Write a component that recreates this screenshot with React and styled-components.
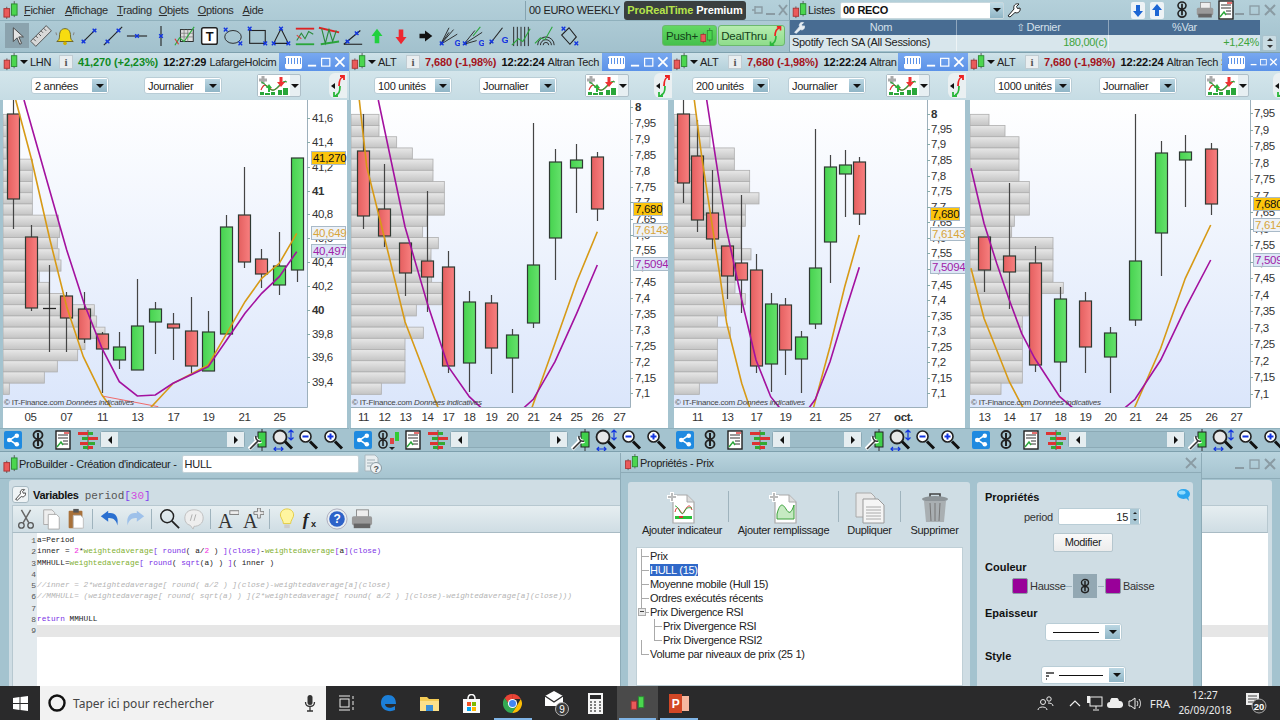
import React from "react";
import styled, { createGlobalStyle } from "styled-components";

const Global = createGlobalStyle`
  html, body { margin: 0; padding: 0; width: 1280px; height: 720px; overflow: hidden; background: #a4c3cf; }
  * { box-sizing: border-box; }
  body { font-family: "Liberation Sans", Arial, sans-serif; font-size: 11px; letter-spacing: -0.3px; color: #222; }
`;

/* ---------- shell ---------- */
const Page = styled.div`display:flex;flex-direction:column;width:1280px;height:720px;overflow:hidden;`;
const TopBand = styled.div`display:flex;height:52px;flex:none;`;
const MainBar = styled.div`width:790px;flex:none;display:flex;flex-direction:column;background:linear-gradient(#b4d0da,#a2c1cd);border-right:1px solid #84a4b1;`;
const MenuRow = styled.div`height:21px;display:flex;align-items:center;padding-left:3px;border-bottom:1px solid #8fb0bc;`;
const MenuItem = styled.span`display:inline-block;margin-left:${p => p.$gap}px;color:#2b2b2b;white-space:nowrap;&::first-letter{text-decoration:underline;}`;
const Instrument = styled.span`margin-left:auto;padding-left:3px;border-left:1px solid #85a3af;height:19px;line-height:18px;white-space:nowrap;`;
const PremiumBadge = styled.span`margin-left:4px;width:122px;flex:none;height:19px;line-height:18px;background:#3a3f3f;border-radius:3px;text-align:center;font-weight:bold;letter-spacing:-0.1px;color:#fff;white-space:nowrap;& i{font-style:normal;color:#b6e34b;}`;
const WindowControls = styled.span`display:flex;gap:3px;align-items:center;flex:none;margin-left:${p => p.$ml ?? "auto"};padding-right:${p => p.$pad ?? 0}px;`;
const ToolRow = styled.div`flex:1;display:flex;align-items:center;padding:0 0 2px 5px;`;
const ToolCell = styled.span`width:24px;height:25px;flex:none;display:flex;align-items:center;justify-content:center;background:${p => p.$on ? "#8ba3ae" : "transparent"};`;
const PushGroup = styled.div`margin-left:auto;margin-right:4px;display:flex;height:21px;gap:1px;`;
const PushButton = styled.span`width:${p => p.$w}px;flex:none;display:flex;align-items:center;justify-content:center;gap:2px;border-radius:3px;font-size:11.5px;letter-spacing:-0.2px;color:#14421a;background:${p => p.$alt ? "linear-gradient(#b5ecae,#8fdd8c)" : "linear-gradient(#62d863,#45c04c)"};border:1px solid #6cb86e;white-space:nowrap;`;

/* list panel */
const ListPanel = styled.div`flex:1;display:flex;flex-direction:column;background:linear-gradient(#b4d0da,#a2c1cd);`;
const ListHead = styled.div`height:20px;display:flex;align-items:center;padding-left:2px;`;
const ListTitle = styled.span`margin-left:1px;width:27px;flex:none;color:#222;`;
const ListSelect = styled.span`margin-left:5px;width:164px;flex:none;height:17px;background:#fff;border-radius:2px;border:1px solid #c8d8de;display:flex;align-items:center;justify-content:space-between;padding-left:2px;font-weight:bold;color:#111;`;
const SmallArrow = styled.span`width:13px;height:15px;background:linear-gradient(#c0dbe6,#8fb5c5);display:flex;align-items:center;justify-content:center;flex:none;&::after{content:"";border:4px solid transparent;border-top-color:#111;border-bottom:0;}`;
const IconSlot = styled.span`display:inline-flex;align-items:center;justify-content:center;flex:none;width:${p => p.$w}px;margin-left:${p => p.$ml || 0}px;`;
const TableHead = styled.div`display:grid;grid-template-columns:167px 152px 151px;height:15px;background:#486c92;color:#d5e0ea;line-height:15px;width:470px;position:relative;`;
const HeadCell = styled.span`text-align:center;border-right:1px solid #8fa6bd;padding-left:${p => p.$pad || 0}px;&:last-child{border:0;}`;
const HeadIcon = styled.span`position:absolute;left:3px;top:1px;display:flex;`;
const SortArrow = styled.span`font-family:"DejaVu Sans",sans-serif;font-size:10px;margin-right:2px;`;
const TableRow = styled.div`display:flex;height:16px;`;
const RowCells = styled.div`display:grid;grid-template-columns:167px 152px 151px;width:470px;background:#d8e6ec;line-height:15px;`;
const RowCell = styled.span`padding:0 1px 0 2px;border-right:1px solid #eef4f6;text-align:${p => p.$right ? "right" : "left"};color:${p => p.$right ? "#3da33b" : "#222"};white-space:nowrap;overflow:hidden;&:last-child{border:0;}`;
const Stepper = styled.span`width:15px;margin-left:2px;background:#c9dce3;border:1px solid #a9c2cc;border-radius:2px;display:flex;flex-direction:column;align-items:center;justify-content:space-around;&::before{content:"";border:3px solid transparent;border-bottom-color:#333;border-top:0;}&::after{content:"";border:3px solid transparent;border-top-color:#333;border-bottom:0;}`;

/* chart windows */
const ChartBand = styled.div`display:flex;height:399px;flex:none;`;
const ChartWindow = styled.div`flex:none;width:${p => p.$w}px;margin-left:${p => p.$ml}px;display:flex;flex-direction:column;overflow:hidden;background:#a4c3cf;`;
const TitleBar = styled.div`height:19px;display:flex;align-items:center;flex:none;background:linear-gradient(#cfe2e9,#b4d0da);padding-left:${p => p.$lead}px;position:relative;overflow:hidden;border-top:1px solid #7ea0ad;`;
const Caret = styled.span`margin:0 2px 0 2px;border:4px solid transparent;border-top-color:#111;border-bottom:0;`;
const Sym = styled.span`width:${p => p.$w}px;flex:none;color:#222;`;
const InfoBox = styled.span`width:14px;height:14px;flex:none;background:#e9eef0;border:1px solid #c0ccd2;font-family:"Liberation Serif",serif;font-weight:bold;font-size:11px;text-align:center;line-height:12px;color:#555;margin-right:5px;`;
const Quote = styled.span`font-weight:bold;flex:none;letter-spacing:-0.1px;margin-right:5px;color:${p => p.$up ? "#108a1e" : "#a3141c"};`;
const Clock = styled.span`font-weight:bold;flex:none;letter-spacing:-0.1px;margin-right:3px;color:#111;`;
const Name = styled.span`white-space:nowrap;color:#222;flex:none;`;
const BlueControls = styled.span`position:absolute;top:0;bottom:0;left:${p => p.$left}px;right:0;background:linear-gradient(#78a8f0,#5b92e8);display:flex;align-items:center;padding-left:6px;gap:3px;`;
const KeyboardKey = styled.span`width:17px;height:13px;background:#fff;border-radius:2px;margin-right:2px;flex:none;background-image:repeating-linear-gradient(90deg,#5b92e8 0 1px,#fff 1px 3px);background-size:100% 6px;background-repeat:no-repeat;background-position:0 2px;`;
const ControlBar = styled.div`height:29px;flex:none;display:flex;align-items:center;background:linear-gradient(#d3e5eb,#c6dce4);padding-left:${p => p.$lead}px;overflow:hidden;`;
const Select = styled.span`width:${p => p.$w || 78}px;height:${p => p.$h || 17}px;flex:none;background:#fff;border:1px solid #b9cdd6;border-radius:3px;display:flex;align-items:center;justify-content:space-between;padding:1px 1px 1px 3px;margin-left:${p => p.$ml || 0}px;white-space:nowrap;`;
const SelectArrow = styled.span`width:15px;align-self:stretch;background:linear-gradient(#bcd7e3,#8fb5c6);display:flex;align-items:center;justify-content:center;flex:none;&::after{content:"";border:4px solid transparent;border-top-color:#111;border-bottom:0;}`;
const IndicatorBtn = styled.span`display:flex;align-items:center;height:23px;flex:none;margin-left:${p => p.$ml}px;background:#e7eff2;border:1px solid #aebfc8;border-radius:2px;`;
const SmallCaret = styled.span`width:10px;height:21px;display:flex;align-items:center;justify-content:center;&::after{content:"";border:4px solid transparent;border-top-color:#111;border-bottom:0;}`;
const SideTab = styled.span`margin-left:auto;margin-right:${p => p.$mr}px;width:18px;height:25px;flex:none;background:#eaf0f2;border-radius:6px 0 0 6px;display:flex;align-items:center;justify-content:center;`;
const Surface = styled.div`margin:0 ${p => p.$mr}px 0 ${p => p.$ml}px;height:328px;flex:none;background:#fff;overflow:hidden;& svg{display:block;}`;
const BottomTools = styled.div`flex:1;display:flex;align-items:center;padding-bottom:1px;background:#a4c3cf;border-top:1px solid #8fb0bc;`;
const BottomCell = styled.span`width:${p => p.$w || 25}px;flex:none;height:21px;display:flex;align-items:center;justify-content:center;`;
const ScrollBar = styled.span`width:${p => p.$w}px;flex:none;height:17px;background:#9dbcc8;border:1px solid #8caab6;border-radius:3px;display:flex;justify-content:space-between;`;
const ScrollEnd = styled.span`width:17px;background:#e5edf0;display:flex;align-items:center;justify-content:center;&::after{content:"";border:4px solid transparent;${p => p.$left ? "border-right-color:#111;border-left:0;" : "border-left-color:#111;border-right:0;"}}`;

const AxisText = styled.text`font-family:"Liberation Sans",Arial,sans-serif;font-size:11.5px;letter-spacing:-0.4px;fill:#333;font-weight:${p => p.$bold ? "bold" : "normal"};dominant-baseline:central;`;
const DateText = styled.text`font-family:"Liberation Sans",Arial,sans-serif;font-size:11.5px;letter-spacing:-0.4px;fill:#333;text-anchor:middle;dominant-baseline:central;font-weight:${p => p.$bold ? "bold" : "normal"};`;
const TagText = styled.text`font-family:"Liberation Sans",Arial,sans-serif;font-size:11.5px;letter-spacing:-0.3px;dominant-baseline:central;`;
const Watermark = styled.text`font-family:"Liberation Sans",Arial,sans-serif;font-size:8px;letter-spacing:-0.2px;fill:#444;& tspan{font-style:italic;}`;

/* builder */
const BuilderBand = styled.div`position:relative;height:235px;flex:none;display:flex;flex-direction:column;background:#a4c3cf;border-top:1px solid #7ea0ad;`;
const BuilderTitle = styled.div`height:27px;flex:none;display:flex;align-items:center;padding:0 0 2px 3px;background:linear-gradient(#b9d4de,#a6c4d0);border-bottom:1px solid #8dabb7;`;
const BuilderLabel = styled.span`margin-left:1px;white-space:nowrap;color:#222;`;
const NameInput = styled.span`margin-left:5px;width:177px;flex:none;height:18px;background:#fff;border:1px solid #c3d2d8;border-radius:2px;padding-left:2px;line-height:16px;`;
const TabPanel = styled.div`flex:1;margin:1px 0 0 9px;width:1263px;background:#cfdde4;border-radius:3px 3px 0 0;display:flex;flex-direction:column;padding:4px 4px 0 3px;`;
const VarRow = styled.div`height:21px;flex:none;display:flex;align-items:center;`;
const WrenchBtn = styled.span`width:17px;height:17px;background:#eef3f5;border:1px solid #a8bac3;border-radius:3px;display:flex;align-items:center;justify-content:center;`;
const VarLabel = styled.span`font-weight:bold;margin-left:4px;color:#111;`;
const VarCode = styled.span`font-family:"Liberation Mono",monospace;font-size:11px;letter-spacing:0;margin-left:6px;margin-top:3px;color:#555;& em{font-style:normal;color:#7f3dee;}& b{font-weight:normal;color:#d24be0;}`;
const EditorBox = styled.div`flex:1;display:flex;flex-direction:column;`;
const EditorTools = styled.div`height:28px;flex:none;display:flex;align-items:center;background:linear-gradient(#e6eef1,#cfdde4);border:1px solid #b7c8d0;border-bottom:1px solid #a9bbc4;`;
const EdCell = styled.span`width:${p => p.$w || 25}px;flex:none;display:flex;align-items:center;justify-content:center;`;
const EdSep = styled.span`width:1px;height:20px;flex:none;background:#9fb3bd;margin:0 4px;`;
const CodeWrap = styled.div`flex:1;display:flex;background:#fff;border-left:1px solid #b7c8d0;overflow:hidden;`;
const Gutter = styled.div`width:24px;flex:none;background:#e3eaee;padding-top:2px;`;
const GutterNum = styled.div`height:11.3px;line-height:11.3px;font-family:"Liberation Mono",monospace;font-size:8px;letter-spacing:0;text-align:right;color:#555;padding-right:1px;`;
const CodeCol = styled.div`flex:1;padding-top:2px;`;
const CodeLine = styled.div`height:11.3px;line-height:11.3px;font-family:"Liberation Mono",monospace;font-size:7.76px;letter-spacing:0;white-space:pre;background:${p => p.$hl ? "#e6e6e6" : "transparent"};`;
const Tok = styled.span`color:${p => ({ k: "#7a2fe6", f: "#82b030", n: "#f030e0", c: "#b4b4b4", t: "#222" }[p.$t])};font-style:${p => p.$t === "c" ? "italic" : "normal"};`;

/* properties dialog */
const Dialog = styled.div`position:absolute;left:620px;top:1px;width:582px;height:233px;background:#a4c3cf;border-left:1px solid #8dabb7;border-right:1px solid #8dabb7;display:flex;flex-direction:column;`;
const DialogTitle = styled.div`height:20px;flex:none;display:flex;align-items:center;padding-left:3px;background:linear-gradient(#b9d4de,#a6c4d0);border-bottom:1px solid #8dabb7;`;
const DialogBody = styled.div`flex:1;display:flex;gap:7px;padding:9px 8px 0 7px;min-height:0;`;
const LeftPane = styled.div`width:342px;flex:none;background:#cfdde4;border-radius:3px 3px 0 0;padding:9px 7px 0 8px;display:flex;flex-direction:column;`;
const RightPane = styled.div`flex:1;background:#cfdde4;border-radius:3px 3px 0 0;padding:8px 8px 0 8px;position:relative;`;
const ActionRow = styled.div`display:flex;height:56px;flex:none;align-items:flex-start;`;
const Action = styled.div`width:${p => p.$w}px;flex:none;display:flex;flex-direction:column;align-items:center;gap:0;`;
const ActionIcon = styled.span`height:33px;display:flex;align-items:flex-end;`;
const ActionLabel = styled.span`white-space:nowrap;color:#222;`;
const ActionSep = styled.span`width:1px;height:31px;flex:none;background:#9fb3bd;`;
const TreeBox = styled.div`flex:1;background:#fff;border:1px solid #bfcfd6;padding-top:1px;`;
const TreeRow = styled.div`height:14px;line-height:14px;padding-left:${p => 13 + p.$depth * 13}px;position:relative;white-space:nowrap;color:#222;&::before{content:"";position:absolute;left:${p => 4 + p.$depth * 13}px;top:7px;width:8px;border-top:1px solid #aaa;}&::after{content:"";position:absolute;left:${p => 4 + p.$depth * 13}px;top:${p => p.$short ? "0" : "-7px"};height:${p => p.$short ? 7 : 14}px;border-left:1px solid #aaa;}`;
const TreeLabel = styled.span`${p => p.$sel ? "background:#2f68c8;color:#fff;" : ""}`;
const Expander = styled.span`position:absolute;left:1px;top:3px;width:8px;height:8px;background:#e8e8e8;border:1px solid #aaa;z-index:1;&::after{content:"";position:absolute;left:1px;top:2px;width:4px;border-top:1px solid #444;}`;
const SectionTitle = styled.div`font-weight:bold;letter-spacing:0;color:#111;height:14px;line-height:14px;margin-top:${p => p.$mt || 0}px;`;
const BubbleSlot = styled.span`position:absolute;right:3px;top:7px;display:flex;`;
const PeriodRow = styled.div`display:flex;align-items:center;margin-top:4px;padding-left:39px;height:17px;`;
const PeriodLabel = styled.span`width:30px;flex:none;color:#333;`;
const NumInput = styled.span`margin-left:4px;width:83px;flex:none;height:17px;background:#fff;border:1px solid #b9cdd6;border-radius:2px;display:flex;align-items:center;justify-content:flex-end;`;
const SpinBtn = styled.span`width:9px;height:15px;margin-left:2px;margin-right:1px;background:#a9c7d4;display:flex;flex-direction:column;justify-content:space-around;align-items:center;&::before{content:"";border:2px solid transparent;border-bottom-color:#222;border-top:0;}&::after{content:"";border:2px solid transparent;border-top-color:#222;border-bottom:0;}`;
const ModifyBtn = styled.div`margin:8px 0 0 68px;width:60px;height:19px;line-height:17px;text-align:center;background:linear-gradient(#fafafa,#ececec);border:1px solid #b5c6ce;border-radius:2px;color:#222;`;
const ColorRow = styled.div`display:flex;align-items:center;height:24px;padding-left:27px;`;
const Swatch = styled.span`width:16px;height:16px;flex:none;background:#990099;border:1px solid #8a9aa2;border-radius:2px;`;
const ColorLabel = styled.span`margin-left:2px;color:#333;width:${p => p.$w}px;flex:none;`;
const Dash = styled.span`width:6px;flex:none;border-top:1px solid #9fb3bd;margin:0 1px 0 1px;`;
const LinkBox = styled.span`width:24px;height:24px;flex:none;background:#93a8b3;display:flex;align-items:center;justify-content:center;`;
const LineSample = styled.span`flex:1;border-top:1px solid #111;margin:0 6px 0 4px;`;
const SelectWrap = styled.div`margin-top:3px;padding-left:${p => p.$lead}px;`;

/* taskbar */
const Taskbar = styled.div`height:34px;flex:none;display:flex;align-items:center;background:#2a2a2b;color:#fff;`;
const StartBtn = styled.span`width:40px;height:34px;flex:none;display:flex;align-items:center;justify-content:center;`;
const SearchBox = styled.span`width:286px;height:34px;flex:none;background:#f2f2f2;display:flex;align-items:center;padding-left:7px;color:#444;font-family:"Noto Sans",sans-serif;font-size:12px;letter-spacing:0;`;
const SearchText = styled.span`margin-left:6px;flex:1;white-space:nowrap;`;
const TaskIcon = styled.span`width:41.5px;height:34px;flex:none;display:flex;align-items:center;justify-content:center;position:relative;background:${p => p.$active ? "#4a4a4a" : "transparent"};&::after{content:"";position:absolute;left:${p => p.$run ? "2px" : "50%"};right:${p => p.$run ? "2px" : "50%"};bottom:0;height:2px;background:#7fb4e6;}`;
const TrayWrap = styled.span`margin-left:auto;display:flex;align-items:center;height:34px;`;
const TrayIcon = styled.span`width:${p => p.$w || 20}px;display:flex;align-items:center;justify-content:center;flex:none;font-size:11.5px;letter-spacing:0;color:#e8e8e8;font-family:"Noto Sans",sans-serif;`;
const ClockBox = styled.span`width:60px;flex:none;text-align:center;line-height:15px;font-size:10px;letter-spacing:0;color:#eee;font-family:"Noto Sans",sans-serif;`;

/* ---------- icons ---------- */
const Svg = ({ w = 24, h = 24, vb = "0 0 24 24", children }) => <svg width={w} height={h} viewBox={vb} fill="none">{children}</svg>;
const Logo = ({ w = 16, h = 20 }) => (
  <Svg w={w} h={h} vb="0 0 16 20">
    <path d="M4 6v13M12 0v17" stroke="#555" />
    <rect x="1" y="8" width="6" height="9" fill="#ea5a5a" stroke="#a33" />
    <rect x="9" y="3" width="6" height="12" fill="#4bd64f" stroke="#2a8a32" />
  </Svg>
);
const P = ({ x, y, c = "#1235e0" }) => <path d={`M${x - 2} ${y - 2}l4 4m0-4l-4 4`} stroke={c} strokeWidth="1.5" />;
const L = ({ d, c = "#222", sw = 1.2 }) => <path d={d} stroke={c} strokeWidth={sw} />;
const tools = {
  cursor: <path d="M8 3v15l4-4 3 7 2-1-3-7h5z" fill="#e4e4e4" stroke="#444" />,
  ruler: <g transform="rotate(-45 12 12)"><rect x="0" y="8" width="24" height="8" fill="#d8d8d8" stroke="#555" /><L d="M4 8v4M8 8v3M12 8v4M16 8v3M20 8v4" c="#555" sw="1" /></g>,
  bell: <g><path d="M12 4c-4 0-6 3-6 8 0 3-1 5-3 6h18c-2-1-3-3-3-6 0-5-2-8-6-8z" fill="#f7dc10" stroke="#6b6420" /><circle cx="12" cy="20" r="2" fill="#d0b000" /><L d="M2 8l1 3M22 8l-1 3" c="#888" /></g>,
  line: <g><L d="M5 19L19 5" /><P x={6} y={18} /><P x={18} y={6} /></g>,
  line2: <g><L d="M2 22L22 2" /><P x={6} y={18} /><P x={18} y={6} /></g>,
  hline: <g><L d="M1 12h22" /><P x={12} y={12} /></g>,
  vline: <g><L d="M12 1v22" /><P x={12} y={12} /></g>,
  grid: <g><rect x="7" y="5" width="14" height="13" fill="#ddd" stroke="#222" /><L d="M7 9h14M7 13h14M11 5v13M15 5v13" c="#777" sw=".8" /><L d="M1 22l5-8 5 4 11-16" c="#2aa63a" /><L d="M1 15l4 6" c="#d33" /></g>,
  text: <g><rect x="4" y="3" width="17" height="18" rx="2" fill="#fff" stroke="#222" strokeWidth="1.6" /><text x="12.5" y="17" textAnchor="middle" fontFamily="Liberation Sans" fontWeight="bold" fontSize="14" fill="#111">T</text></g>,
  ellipse: <g><ellipse cx="12" cy="13" rx="9" ry="7" stroke="#222" /><P x={4} y={5} /><P x={20} y={20} /></g>,
  rect: <g><rect x="4" y="6" width="17" height="14" stroke="#222" strokeWidth="1.2" /><P x={4} y={4} /><P x={21} y={20} /></g>,
  tri: <g><path d="M12 4L4 20h16z" stroke="#222" strokeWidth="1.2" /><P x={12} y={4} /><P x={4} y={20} /><P x={20} y={20} /></g>,
  zig: <g><L d="M2 4h20" c="#d22" sw="2" /><L d="M2 21h20" c="#2aa63a" sw="2" /><L d="M3 17l5-8 4 6 4-8 5 3" c="#2a8a3a" /><L d="M3 11l5 4" c="#d44" /></g>,
  fan: <g><L d="M1 3l22 5" c="#d22" sw="2" /><L d="M3 21l20-3" c="#2aa63a" sw="2" /><L d="M4 4l4 16 4-15 4 13 4-12" c="#2a8a3a" /></g>,
  angle: <g><L d="M2 21L20 6" /><L d="M2 21h20" /><P x={6} y={18} /><P x={16} y={9} /></g>,
  up: <path d="M12 4l6 8h-3.5v8h-5v-8H6z" fill="#21d13f" />,
  down: <path d="M12 21l6-8h-3.5V5h-5v8H6z" fill="#ee2730" />,
  right: <path d="M20 12l-8-6v3.5H6v5h6V18z" fill="#111" />,
  gfan: <g><L d="M3 21L12 3M3 21L17 5M3 21L21 10M3 21l9-13" c="#222" sw="1" /><P x={4} y={20} /><text x="18" y="23" fontFamily="Liberation Sans" fontWeight="bold" fontSize="9" fill="#1235e0">G</text></g>,
  gfan2: <g><L d="M2 21L14 6M2 21L22 8M2 21l14-4" c="#222" sw="1" /><L d="M12 12l8-10" c="#2aa63a" /><P x={3} y={20} /><text x="18" y="23" fontFamily="Liberation Sans" fontWeight="bold" fontSize="9" fill="#1235e0">G</text></g>,
  gline: <g><L d="M4 21L18 3" /><P x={6} y={18} /><text x="17" y="20" fontFamily="Liberation Sans" fontWeight="bold" fontSize="10" fill="#1235e0">G</text></g>,
  fib: <g><L d="M4 2v21M8 2v21M12 2v21M16 2v21M20 2v21" c="#222" sw="1" /><L d="M2 22l7-7 5 3 8-14" c="#2aa63a" /></g>,
  arc: <g><path d="M4 22a9 9 0 0 1 18 0M7 22a6 6 0 0 1 12 0M10 22a3 3 0 0 1 6 0" stroke="#222" /><L d="M1 20l6-6 5 2 8-14" c="#2aa63a" /></g>,
  diamond: <g><path d="M12 3l8 10-7 8-9-10z" stroke="#222" strokeWidth="1.2" /><P x={6} y={4} /><P x={20} y={20} /></g>,
};
const toolOrder = Object.keys(tools);

const Share = () => (
  <Svg w={18} h={18} vb="0 0 19 19">
    <rect width="19" height="19" rx="2" fill="#1f8ae0" />
    <path d="M13 5L6 9.5l7 4.5" stroke="#fff" strokeWidth="1.6" />
    <circle cx="13.5" cy="5" r="2.4" fill="#fff" /><circle cx="13.5" cy="14" r="2.4" fill="#fff" /><circle cx="5.5" cy="9.5" r="2.4" fill="#fff" />
  </Svg>
);
const Chain = ({ w = 18, h = 20, c = "#222" }) => (
  <Svg w={w} h={h} vb="0 0 18 20">
    <ellipse cx="9" cy="5" rx="4.5" ry="4" stroke={c} strokeWidth="1.8" />
    <ellipse cx="9" cy="14" rx="4.5" ry="4" stroke={c} strokeWidth="1.8" />
    <path d="M9 3v13" stroke={c} strokeWidth="2" />
  </Svg>
);
const ChainCandle = () => (
  <Svg w={24} h={22} vb="0 0 24 22">
    <ellipse cx="7" cy="6" rx="4" ry="4" stroke="#222" strokeWidth="1.6" /><ellipse cx="7" cy="15" rx="4" ry="4" stroke="#222" strokeWidth="1.6" />
    <path d="M7 4v13" stroke="#222" strokeWidth="1.6" />
    <rect x="14" y="9" width="4" height="6" fill="#d44" /><rect x="19" y="3" width="4" height="9" fill="#3c3" />
    <path d="M13 18h6l-3 3z" fill="#222" />
  </Svg>
);
const Note = () => (
  <Svg w={16} h={20} vb="0 0 16 20">
    <rect x="1" y="1" width="14" height="18" fill="#fff" stroke="#222" strokeWidth="1.4" />
    <path d="M3 5h10M3 8h10M8 11h5M8 14h5" stroke="#333" />
    <path d="M2 17l4-5 2 3" stroke="#2aa63a" strokeWidth="1.4" /><path d="M9 3h5" stroke="#d33" strokeWidth="1.4" />
  </Svg>
);
const Ladder = () => (
  <Svg w={22} h={20} vb="0 0 22 20">
    <path d="M11 0v20" stroke="#888" strokeWidth="2" />
    <rect x="1" y="2" width="10" height="3" fill="#d33" /><rect x="11" y="2" width="5" height="3" fill="#3a3" />
    <rect x="5" y="7" width="6" height="3" fill="#3a3" /><rect x="11" y="7" width="10" height="3" fill="#d33" />
    <rect x="3" y="12" width="8" height="3" fill="#d33" /><rect x="11" y="12" width="7" height="3" fill="#3a3" />
    <rect x="6" y="16" width="5" height="3" fill="#3a3" /><rect x="11" y="16" width="5" height="3" fill="#d33" />
  </Svg>
);
const WrenchChart = () => (
  <Svg w={20} h={22} vb="0 0 20 22">
    <path d="M14 0v22" stroke="#333" /><rect x="10" y="3" width="8" height="15" fill="#3fcf4a" stroke="#222" />
    <path d="M1 20l9-9M8 8a3.5 3.5 0 0 0 5 4" stroke="#fff" strokeWidth="4" />
    <path d="M2 20l8-8M8 7a4 4 0 0 0 5 5" stroke="#333" strokeWidth="1.6" />
  </Svg>
);
const Magnifier = ({ kind }) => (
  <Svg w={24} h={22} vb="0 0 24 22">
    {kind === "fit"
      ? <circle cx="9" cy="8" r="6.5" fill="#e8e8e8" stroke="#222" strokeWidth="1.8" />
      : <circle cx="9.500" cy="7.500" r="5.500" fill="#fff" stroke="#222" strokeWidth="1.6" />}
    <path d="M14 12.500l7 7" stroke="#111" strokeWidth="3" />
    {kind !== "fit" && <path d="M6.500 7.500h6" stroke="#1235e0" strokeWidth="2" />}
    {kind === "plus" && <path d="M9.500 4.500v6" stroke="#1235e0" strokeWidth="2" />}
    {kind === "fit" && <path d="M20 1v10M17.500 3.500L20 1l2.500 2.500M17.500 8.500L20 11l2.500-2.500M3 20h9M5 18l-2 2 2 2M10 18l2 2-2 2" stroke="#1235e0" strokeWidth="1.2" />}
  </Svg>
);
const IndicatorIcon = () => (
  <Svg w={32} h={21} vb="0 0 32 21">
    <rect width="32" height="21" fill="#fff" />
    <path d="M5 1v8M1 5h8" stroke="#aaa" strokeWidth="3" />
    <path d="M3 15c4-10 7-2 11 0s8-7 14-9" stroke="#d33" strokeWidth="1.2" />
    <path d="M3 7c4 0 8 10 13 8s7-10 13-8" stroke="#2aa63a" strokeWidth="1.2" />
    <path d="M23 2l4 5h-2.500v5h-3V7H19z" fill="#e33" transform="rotate(180 23 7)" />
    <path d="M11 9l3 4h-2v4h-2v-4H8z" fill="#2ab63a" />
    <path d="M2 17h4v3H2zM7 18h5v2H7zM13 17h4v3h-4zM20 15h4v5h-4zM25 13h5v7h-5z" fill="#2aa63a" />
  </Svg>
);
const Thrust = ({ w = 13, h = 20 }) => (
  <Svg w={w} h={h} vb="0 0 13 22">
    <path d="M6 11C6 5 8 3 11 2M8 1h4v4" stroke="#e22" strokeWidth="1.8" />
    <path d="M7 11c0 6-2 8-5 9M5 21H1v-4" stroke="#2ab63a" strokeWidth="1.8" />
  </Svg>
);
const SideArrows = () => (
  <Svg w={15} h={22} vb="0 0 15 22">
    <path d="M0 11l4-3v6z" fill="#111" />
    <path d="M8 11C8 5 9 3 12 2M9 1h4v4" stroke="#e22" strokeWidth="1.8" />
    <path d="M9 11c0 6-1 8-4 9M7 21H3v-4" stroke="#2ab63a" strokeWidth="1.8" />
  </Svg>
);
const WinMarks = ({ c }) => (
  <Svg w={46} h={12} vb="0 0 46 12">
    <path d="M1 10h9" stroke={c} strokeWidth="2" />
    <rect x="16" y="2" width="9" height="8.500" stroke={c} strokeWidth="1.3" />
    <path d="M31 1l10 10m0-10L31 11" stroke={c} strokeWidth="2" />
  </Svg>
);
const PinMarks = ({ c }) => (
  <Svg w={36} h={12} vb="0 0 36 12">
    <path d="M0 6h3M3 2v8M3 3h7v6H3z" stroke={c} strokeWidth="1.400" />
    <path d="M14 10h9" stroke={c} strokeWidth="2" />
    <path d="M27 1l8 10m0-10l-8 10" stroke={c} strokeWidth="2" />
  </Svg>
);
const Wrench = ({ s = 16, c = "#222", fill = "#fff" }) => (
  <Svg w={s} h={s} vb="0 0 16 16">
    <path d="M2 14l6-7c-1-3 1-6 5-5l-2.500 2.500 1 2L14 6c1 3-2 6-5 4.500L4 15z" fill={fill} stroke={c} />
  </Svg>
);

const DocPlus = ({ wave }) => (
  <Svg w={32} h={32} vb="0 0 32 32">
    <path d="M7 3h14l7 7v21H7z" fill="#fff" stroke="#aaa" strokeWidth="1.2" /><path d="M21 3v7h7" fill="#ddd" stroke="#aaa" />
    <path d="M6 0v10M1 5h10" stroke="#fff" strokeWidth="4" /><path d="M6 1v8M2 5h8" stroke="#bbb" strokeWidth="2" />
    {wave
      ? <path d="M9 27V22c3-12 6-10 9-5s5 5 8-4v14z" fill="#c6eac2" stroke="#3aa03a" />
      : <g><path d="M9 20c3-12 6 6 9 0s6-9 8-2" stroke="#d33" /><path d="M9 14c4 0 6 12 9 6s6-4 8-4" stroke="#2aa63a" /><path d="M9 27h17v-3H9z" fill="#2ac03a" /><path d="M13 26h4v-2h-4z" fill="#d33" /></g>}
  </Svg>
);
const Duplicate = () => (
  <Svg w={32} h={32} vb="0 0 32 32">
    <path d="M2 1h15l4 4v20H2z" fill="#e8e8e8" stroke="#aaa" />
    <path d="M9 7h15l6 6v18H9z" fill="#f5f5f5" stroke="#999" />
    <path d="M12 15h15M12 18h15M12 21h15M12 24h15M12 27h15" stroke="#aaa" />
  </Svg>
);
const Trash = () => (
  <Svg w={28} h={32} vb="0 0 28 32">
    <path d="M9 5V2h10v3" stroke="#444" strokeWidth="1.6" />
    <ellipse cx="14" cy="7" rx="13" ry="3" fill="#8d9498" />
    <path d="M3 9l2 21h18l2-21z" fill="#a9afb2" />
    <path d="M9 11l1 18M14 11v18M19 11l-1 18" stroke="#777" />
  </Svg>
);

const edIcons = {
  cut: <g><path d="M7 2l8 14M17 2L9 16" stroke="#666" strokeWidth="1.6" /><circle cx="7" cy="19" r="3" stroke="#555" strokeWidth="1.4" /><circle cx="17" cy="19" r="3" stroke="#555" strokeWidth="1.4" /></g>,
  copy: <g><path d="M4 2h9l3 3v13H4z" fill="#eee" stroke="#aaa" /><path d="M9 7h9l3 3v13H9z" fill="#fff" stroke="#aaa" /></g>,
  paste: <g><rect x="4" y="3" width="15" height="19" rx="1" fill="#a8713a" /><rect x="9" y="1" width="6" height="4" fill="#555" /><path d="M9 8h8l3 3v11H9z" fill="#fff" stroke="#bbb" /></g>,
  undo: <g><path d="M9 6c8-2 13 3 11 13-1-6-5-9-11-8z" fill="#2a6fd0" /><path d="M2 9l8-6v12z" fill="#2a6fd0" /></g>,
  redo: <g><path d="M15 6C7 4 2 9 4 19c1-6 5-9 11-8z" fill="#9ec1ea" /><path d="M22 9l-8-6v12z" fill="#9ec1ea" /></g>,
  find: <g><circle cx="10" cy="9" r="7" stroke="#222" strokeWidth="1.6" /><path d="M15 14l8 8" stroke="#222" strokeWidth="2" /></g>,
  comment: <g><path d="M12 2c7 0 10 4 10 9 0 6-5 9-10 9l-1 3-3-4c-4-1-6-4-6-8 0-5 3-9 10-9z" fill="#eee" stroke="#bbb" /><path d="M10 7l-2 7M14 7l-2 7" stroke="#aaa" /></g>,
  less: <g><text x="1" y="22" fontFamily="Liberation Serif" fontSize="22" fill="#333">A</text><rect x="14" y="3" width="10" height="4" fill="#eee" stroke="#777" /></g>,
  more: <g><text x="1" y="22" fontFamily="Liberation Serif" fontSize="22" fill="#333">A</text><path d="M17 0h3v4h4v3h-4v4h-3V7h-4V4h4z" fill="#eee" stroke="#777" /></g>,
  bulb: <g><path d="M12 1c-5 0-8 4-7 8 1 3 3 5 3 8h8c0-3 2-5 3-8 1-4-2-8-7-8z" fill="#fff5a0" stroke="#e2c93a" /><rect x="9" y="18" width="6" height="4" fill="#ccc" /></g>,
  fx: <g><text x="2" y="18" fontFamily="Liberation Serif" fontStyle="italic" fontWeight="bold" fontSize="19" fill="#222">f</text><text x="11" y="21" fontFamily="Liberation Sans" fontWeight="bold" fontSize="10" fill="#222">x</text></g>,
  help: <g><circle cx="12" cy="12" r="11" fill="#e8eef2" stroke="#aab" /><circle cx="12" cy="12" r="8.500" fill="#2d62c8" /><text x="12" y="16.500" textAnchor="middle" fontFamily="Liberation Sans" fontWeight="bold" fontSize="13" fill="#fff">?</text></g>,
  print: <g><rect x="6" y="2" width="13" height="8" fill="#eee" stroke="#888" /><rect x="1" y="9" width="22" height="10" rx="2" fill="#9a9a9a" /><rect x="3" y="17" width="18" height="5" fill="#666" /></g>,
};

const Tiny = {
  win: <Svg w={15} h={15} vb="0 0 15 15"><path d="M0 2l6.500-1v6H0zM7.500 1L15 0v7H7.500zM0 8h6.500v6L0 13zM7.500 8H15v7l-7.500-1z" fill="#fff" /></Svg>,
  ring: <Svg w={20} h={20} vb="0 0 20 20"><circle cx="10" cy="10" r="7.500" stroke="#111" strokeWidth="2.4" /></Svg>,
  mic: <Svg w={12} h={17} vb="0 0 12 17"><rect x="3.500" y="0" width="5" height="10" rx="2.500" fill="#333" /><path d="M1.500 7c0 6 9 6 9 0M6 12v4M3 16h6" stroke="#333" strokeWidth="1.300" /></Svg>,
  view: <Svg w={16} h={16} vb="0 0 16 16"><rect x="1" y="4" width="9" height="8" stroke="#eee" /><path d="M0 1h11M0 15h11M14 1v3M14 6v4M14 12v3" stroke="#eee" /></Svg>,
  edge: <Svg w={18} h={18} vb="0 0 18 18"><path d="M2 9c0-5 3-8 7-8 5 0 8 3 8 9H6c0 4 6 5 10 2v4c-6 3-14 0-14-7z" fill="#1c7fd8" /></Svg>,
  folder: <Svg w={19} h={17} vb="0 0 19 17"><path d="M0 2h7l2 2h10v12H0z" fill="#f4cc56" /><rect x="0" y="6" width="19" height="10" fill="#fbe08a" /><rect x="6" y="10" width="7" height="6" fill="#3a8fd8" /></Svg>,
  store: <Svg w={17} h={19} vb="0 0 17 19"><rect x="0" y="5" width="17" height="14" fill="#fafafa" /><path d="M5 5c0-6 7-6 7 0" stroke="#fafafa" strokeWidth="1.500" /><rect x="4" y="8" width="4" height="4" fill="#f25022" /><rect x="9" y="8" width="4" height="4" fill="#7fba00" /><rect x="4" y="13" width="4" height="4" fill="#00a4ef" /><rect x="9" y="13" width="4" height="4" fill="#ffb900" /></Svg>,
  chrome: <Svg w={19} h={19} vb="0 0 19 19"><path d="M9.500 0a9.500 9.500 0 0 1 8.300 5H9.500z" fill="#ea4335" /><path d="M1.700 4a9.500 9.500 0 0 1 8-4v5l-2 8z" fill="#ea4335" /><path d="M17.800 5A9.500 9.500 0 0 1 9 19l4-6z" fill="#fbbc05" /><path d="M1.700 4A9.500 9.500 0 0 0 9 19l4-6-5 0z" fill="#34a853" /><circle cx="9.500" cy="9.500" r="4.600" fill="#fff" /><circle cx="9.500" cy="9.500" r="3.500" fill="#4285f4" /></Svg>,
  mail: <Svg w={30} h={26} vb="-5 0 30 26"><path d="M1 6l9-5 9 5v10H1z" fill="#fff" /><path d="M1 6l9 6 9-6" stroke="#2a2a2b" strokeWidth="1.400" /><circle cx="18" cy="19" r="6.500" fill="#3a3a3a" stroke="#bbb" /><text x="18" y="22.500" textAnchor="middle" fontFamily="Liberation Sans" fontSize="10" fill="#fff">9</text></Svg>,
  calc: <Svg w={15} h={21} vb="0 0 15 21"><rect width="15" height="21" fill="#f5f5f5" /><rect x="2" y="2" width="11" height="4" fill="#2a2a2b" /><path d="M2 9h2M6 9h2M11 9h2M2 12h2M6 12h2M11 12h2M2 15h2M6 15h2M11 15h2M2 18h2M6 18h2M11 18h2" stroke="#555" strokeWidth="1.500" /></Svg>,
  ppt: <Svg w={20} h={19} vb="0 0 20 19"><rect x="6" y="2" width="14" height="15" fill="#f6b8a0" /><rect x="0" y="0" width="13" height="19" fill="#d24726" /><text x="6.500" y="14" textAnchor="middle" fontFamily="Liberation Sans" fontWeight="bold" fontSize="12" fill="#fff">P</text></Svg>,
  person: <Svg w={17} h={15} vb="0 0 17 15"><circle cx="6" cy="6" r="2.500" stroke="#eee" /><path d="M1 14c0-4 9-4 9 0" stroke="#eee" /><circle cx="12" cy="3" r="2.200" stroke="#eee" /><path d="M11 7c3 0 5 1 5 3" stroke="#eee" /></Svg>,
  chev: <Svg w={12} h={8} vb="0 0 12 8"><path d="M1 7l5-5 5 5" stroke="#eee" strokeWidth="1.200" /></Svg>,
  net: <Svg w={16} h={15} vb="0 0 16 15"><rect x="3" y="1" width="12" height="9" stroke="#eee" /><rect x="0" y="0" width="3" height="7" fill="#eee" /><path d="M9 10v3M6 14h6" stroke="#eee" /></Svg>,
  cloud: <Svg w={16} h={10} vb="0 0 16 10"><path d="M3 10a3 3 0 0 1 0-6 4.500 4.500 0 0 1 9-1 3.500 3.500 0 0 1 1 7z" fill="#eee" /></Svg>,
  vol: <Svg w={15} h={13} vb="0 0 15 13"><path d="M1 4h2l4-3v11L3 9H1z" stroke="#eee" /><path d="M9 4c1 2 1 3 0 5M11 2c2 3 2 6 0 9" stroke="#eee" /></Svg>,
  notif: <Svg w={26} h={24} vb="0 0 26 24"><rect x="1" y="2" width="13" height="12" fill="#eee" /><path d="M3 5h9M3 8h9M3 11h6" stroke="#444" /><circle cx="14" cy="15" r="7" fill="#333" stroke="#aaa" /><text x="14" y="18.500" textAnchor="middle" fontFamily="Liberation Sans" fontSize="9.500" fontWeight="bold" fill="#fff">20</text></Svg>,
  arrowD: <Svg w={14} h={17} vb="0 0 14 17"><rect width="14" height="17" fill="#eef3f6" rx="2" /><path d="M7 15l5-6H9V3H5v6H2z" fill="#1d66d4" /></Svg>,
  arrowU: <Svg w={14} h={17} vb="0 0 14 17"><rect width="14" height="17" fill="#eef3f6" rx="2" /><path d="M7 2l5 6H9v6H5V8H2z" fill="#1d66d4" /></Svg>,
  printer: <Svg w={20} h={18} vb="0 0 24 24"><rect x="6" y="2" width="13" height="8" fill="#eee" stroke="#888" /><rect x="1" y="9" width="22" height="10" rx="2" fill="#9a9a9a" /><rect x="3" y="17" width="18" height="5" fill="#666" /></Svg>,
  docHelp: <Svg w={20} h={20} vb="0 0 20 20"><path d="M2 1h10l3 3v13H2z" fill="#e8eef0" stroke="#aab8bf" /><path d="M4 6h8M4 9h6M4 12h5" stroke="#a0aeb5" /><circle cx="13" cy="14" r="5.500" fill="#eef3f5" stroke="#8a9aa2" /><text x="13" y="17.500" textAnchor="middle" fontFamily="Liberation Sans" fontWeight="bold" fontSize="9" fill="#555">?</text></Svg>,
  styleSample: <Svg w={10} h={9} vb="0 0 10 9"><path d="M1 2h8M1 5h3M1 8h1" stroke="#333" strokeWidth="1.500" /></Svg>,
  bubble: <Svg w={13} h={12} vb="0 0 13 12"><ellipse cx="6.500" cy="5" rx="6.500" ry="5" fill="#2aa5ee" /><ellipse cx="5" cy="3.500" rx="3.500" ry="2" fill="#8fdcff" /><path d="M8 8l4 4-1-5z" fill="#2aa5ee" /></Svg>,
};

/* ---------- chart data (points read off the reference at 3x, offset by ox) ---------- */
const R = "r", G = "g", D = "d";
const charts = [
  {
    left: 0, width: 349, ml: 0, surfL: 3, surfR: 347, plotR: 307, ctlLeft: 279, lead: 3, symW: 29, name: "LafargeHolcim", sym: "LHN", up: true, quote: "41,270 (+2,23%)", clock: "12:27:29",
    span: "2 années", ctl: { lead: 31, g1: 35, g2: 35, tab: 2 }, bars: 145, ox: 0,
    rows: [20, 20, 20, 20, 97, 97, 97, 97, 97, 175, 179, 172, 177, 183, 118, 147, 190, 283, 290, 315, 255, 233, 172, 133, 28],
    candles: [[13, 100, 229, 114, 199, R], [31, 225, 311, 237, 308, R], [49, 265, 352, 308, 308, D], [66, 292, 352, 296, 318, R], [84, 292, 343, 309, 339, R], [102, 332, 393, 334, 349, R], [119, 332, 369, 347, 360, G], [137, 279, 370, 326, 370, G], [155, 302, 354, 309, 322, G], [173, 313, 360, 324, 328, R], [191, 297, 373, 331, 366, R], [208, 311, 371, 332, 371, G], [226, 215, 334, 227, 334, G], [244, 167, 268, 215, 262, R], [261, 249, 288, 259, 274, R], [279, 232, 295, 266, 285, G], [297, 158, 282, 158, 270, G]],
    orange: [[47, 0], [95, 180], [150, 420], [200, 620], [250, 770], [306, 885], [335, 925], [450, 925], [520, 850], [625, 795], [680, 700], [735, 605], [785, 535], [838, 490], [890, 400]],
    purple: [[72, 0], [140, 240], [200, 450], [252, 610], [306, 745], [358, 845], [412, 888], [466, 885], [519, 850], [572, 825], [625, 800], [680, 720], [735, 640], [785, 580], [838, 530], [890, 455]],
    red: [[306, 888], [475, 920]],
    axisX: 312, axis: [["41,6", 118], ["41,4", 142], ["41,2", 167], ["41", 191, 1], ["40,8", 214], ["40,6", 238], ["40,4", 262], ["40,2", 286], ["40", 310, 1], ["39,8", 334], ["39,6", 357], ["39,4", 382]],
    tags: [["41,270", 158, 311, 34, 1], ["40,649", 233, 311, 34], ["40,497", 251, 311, 34]],
    dates: [["05", 30], ["07", 66], ["11", 102], ["13", 137], ["17", 173], ["19", 208], ["21", 244], ["25", 279]],
  },
  {
    left: 350, width: 322, ml: 1, surfL: 351, surfR: 668, plotR: 630, ctlLeft: 252, lead: 1, symW: 28, name: "Altran Tech SA", sym: "ALT", quote: "7,680 (-1,98%)", clock: "12:22:24",
    span: "100 unités", ctl: { lead: 24, g1: 27, g2: 28, tab: 0 }, bars: 118, ox: 350,
    rows: [87, 87, 140, 187, 249, 249, 283, 283, 283, 231, 218, 265, 243, 243, 245, 275, 275, 199, 165, 220, 165, 165, 165, 165, 94],
    candles: [[363, 114, 229, 151, 216, R], [384, 164, 247, 209, 236, R], [405, 243, 296, 243, 273, R], [427, 191, 312, 261, 277, R], [448, 251, 373, 267, 366, R], [469, 291, 392, 302, 363, G], [491, 295, 374, 303, 348, R], [512, 329, 393, 335, 358, G], [533, 123, 328, 265, 323, G], [555, 149, 280, 162, 238, G], [576, 144, 213, 160, 168, G], [597, 152, 221, 157, 209, R]],
    orange: [[28, 0], [50, 200], [110, 440], [165, 665], [232, 840], [265, 925], [545, 925], [615, 730], [680, 545], [742, 395]],
    purple: [[85, 0], [165, 380], [232, 610], [295, 800], [358, 890], [395, 925], [520, 925], [550, 898], [615, 785], [680, 640], [742, 495]],
    axisX: 635, axis: [["8", 107, 1], ["7,95", 123], ["7,9", 139], ["7,85", 155], ["7,8", 171], ["7,75", 187], ["7,7", 202], ["7,65", 219], ["7,6", 235], ["7,55", 250], ["7,5", 266], ["7,45", 282], ["7,4", 298], ["7,35", 314], ["7,3", 330], ["7,25", 346], ["7,2", 362], ["7,15", 378], ["7,1", 393]],
    tags: [["7,680", 209, 633, 29, 1], ["7,6143", 230, 633, 35], ["7,5094", 264, 633, 35]],
    dates: [["11", 363], ["12", 384], ["13", 405], ["14", 427], ["17", 448], ["18", 469], ["19", 491], ["20", 512], ["21", 533], ["24", 555], ["25", 576], ["26", 597], ["27", 619]],
  },
  {
    left: 672, width: 296, ml: 0, surfL: 674, surfR: 965, plotR: 927, ctlLeft: 226, lead: 1, symW: 28, name: "Altran Tech SA", sym: "ALT", quote: "7,680 (-1,98%)", clock: "12:22:24",
    span: "200 unités", ctl: { lead: 20, g1: 18, g2: 20, tab: 2 }, bars: 90, ox: 670,
    rows: [80, 120, 120, 193, 193, 239, 239, 267, 226, 226, 213, 213, 243, 195, 195, 195, 226, 170, 142, 181, 142, 142, 142, 142, 88],
    candles: [[683, 100, 203, 114, 183, R], [697, 120, 232, 156, 220, R], [712, 170, 249, 213, 239, R], [727, 246, 299, 246, 276, R], [741, 195, 313, 263, 280, R], [756, 254, 373, 270, 366, R], [771, 293, 392, 304, 364, G], [785, 298, 375, 305, 350, R], [801, 331, 393, 337, 359, G], [815, 129, 329, 268, 324, G], [830, 155, 283, 167, 242, G], [845, 150, 217, 165, 174, G], [859, 157, 225, 162, 214, R]],
    orange: [[73, 0], [95, 170], [150, 530], [170, 670], [215, 850], [240, 925], [430, 925], [480, 740], [524, 560], [568, 405]],
    purple: [[110, 0], [170, 390], [215, 600], [258, 780], [302, 890], [330, 925], [416, 925], [436, 898], [480, 785], [524, 640], [568, 502]],
    axisX: 931, axis: [["8", 114, 1], ["7,95", 129], ["7,9", 144], ["7,85", 160], ["7,8", 176], ["7,75", 191], ["7,7", 207], ["7,65", 222], ["7,6", 238], ["7,55", 253], ["7,5", 269], ["7,45", 285], ["7,4", 300], ["7,35", 316], ["7,3", 331], ["7,25", 347], ["7,2", 362], ["7,15", 378], ["7,1", 393]],
    tags: [["7,680", 214, 930, 29, 1], ["7,6143", 234, 930, 35], ["7,5094", 267, 930, 35]],
    dates: [["11", 697], ["13", 727], ["17", 756], ["19", 785], ["21", 815], ["25", 845], ["27", 874], ["oct.", 903, 1]],
  },
  {
    left: 968, width: 312, ml: 0, surfL: 970, surfR: 1280, plotR: 1250, ctlLeft: 254, lead: 2, symW: 28, name: "Altran Tech SA", sym: "ALT", quote: "7,680 (-1,98%)", clock: "12:22:24",
    span: "1000 unités", ctl: { lead: 26, g1: 27, g2: 28, tab: -11 }, bars: 117, ox: 965,
    rows: [72, 120, 162, 162, 162, 162, 193, 193, 193, 148, 140, 264, 264, 264, 264, 295, 190, 190, 172, 172, 172, 172, 172, 172, 108],
    candles: [[984, 237, 292, 237, 270, R], [1009, 183, 309, 256, 272, R], [1035, 246, 372, 263, 365, R], [1060, 287, 392, 299, 362, G], [1085, 292, 373, 301, 347, R], [1110, 327, 393, 333, 357, G], [1135, 114, 326, 261, 320, G], [1161, 141, 276, 153, 233, G], [1185, 135, 207, 152, 160, G], [1211, 143, 215, 149, 204, R]],
    orange: [[18, 505], [57, 655], [95, 750], [133, 845], [175, 925], [508, 925], [587, 745], [661, 535], [737, 375]],
    purple: [[18, 205], [57, 370], [95, 490], [133, 600], [170, 700], [209, 775], [284, 890], [325, 925], [478, 925], [510, 898], [587, 780], [661, 625], [737, 480]],
    axisX: 1254, axis: [["7,95", 113], ["7,9", 130], ["7,85", 146], ["7,8", 163], ["7,75", 179], ["7,7", 196], ["7,65", 212], ["7,6", 229], ["7,55", 245], ["7,5", 262], ["7,45", 278], ["7,4", 295], ["7,35", 311], ["7,3", 328], ["7,25", 344], ["7,2", 361], ["7,15", 377], ["7,1", 394]],
    tags: [["7,680", 204, 1253, 29, 1], ["7,6143", 225, 1253, 35], ["7,5094", 260, 1253, 35]],
    dates: [["13", 984], ["14", 1009], ["17", 1035], ["18", 1060], ["19", 1085], ["20", 1110], ["21", 1135], ["24", 1161], ["25", 1185], ["26", 1211], ["27", 1236]],
  },
];

const toPts = (pts, ox) => pts.map(([x, y]) => `${(x / 3 + ox).toFixed(1)},${(y / 3 + 100).toFixed(1)}`).join(" ");

const ChartPlot = ({ c, i }) => {
  const w = c.surfR - c.surfL;
  return (
    <svg width={w} height={328} viewBox={`${c.surfL} 100 ${w} 328`}>
      <defs>
        <linearGradient id={`bg${i}`} x1="0" y1="0" x2="0" y2="1"><stop offset="0" stopColor="#fff" /><stop offset="1" stopColor="#dbe6fb" /></linearGradient>
        <linearGradient id={`row${i}`} x1="0" y1="0" x2="0" y2="1"><stop offset="0" stopColor="#e8e8e8" /><stop offset="1" stopColor="#c4c4c4" /></linearGradient>
        <linearGradient id={`red${i}`} x1="0" y1="0" x2="1" y2="0"><stop offset="0" stopColor="#e45f5f" /><stop offset="1" stopColor="#f88080" /></linearGradient>
        <linearGradient id={`grn${i}`} x1="0" y1="0" x2="1" y2="0"><stop offset="0" stopColor="#46d24f" /><stop offset="1" stopColor="#66e26c" /></linearGradient>
        <clipPath id={`clip${i}`}><rect x={c.surfL} y="100" width={c.plotR - c.surfL} height="307" /></clipPath>
      </defs>
      <rect x={c.surfL} y="100" width={c.plotR - c.surfL} height="307" fill={`url(#bg${i})`} />
      <path d={`M${c.plotR + .5} 100V407.500H${c.surfL}`} stroke="#9db0bc" fill="none" />
      <g clipPath={`url(#clip${i})`}>
        {c.rows.map((r, k) => (
          <rect key={k} x={c.surfL} y={(43 + 33.6 * k) / 3 + 100} width={Math.max(r / 3 + c.ox - c.surfL, 1)} height={11.2} fill={`url(#row${i})`} stroke="#adadad" strokeWidth=".8" />
        ))}
        {c.red && <polyline points={toPts(c.red, c.ox)} stroke="#f06a6a" fill="none" />}
        {c.candles.map(([x, wt, wb, bt, bb, col], k) => (
          <g key={k}>
            <path d={`M${x + .5} ${wt}V${wb}`} stroke="#444" strokeWidth="1.200" />
            {col === D
              ? <path d={`M${x - 6} ${bt + .5}H${x + 7}`} stroke="#222" strokeWidth="1.300" />
              : <rect x={x - 5.500} y={bt} width="12" height={bb - bt} fill={`url(#${col === R ? "red" : "grn"}${i})`} stroke="#2f3a33" strokeWidth="1.200" />}
          </g>
        ))}
        <polyline points={toPts(c.orange, c.ox)} stroke="#d79a16" strokeWidth="1.600" fill="none" />
        <polyline points={toPts(c.purple, c.ox)} stroke="#a3119f" strokeWidth="1.600" fill="none" />
        <Watermark x={c.surfL + 1} y={405}>© IT-Finance.com  <tspan>Données indicatives</tspan></Watermark>
      </g>
      {c.axis.map(([t, y, b]) => (
        <g key={t}>
          <path d={`M${c.plotR} ${y + .5}h3`} stroke="#8aa" />
          <AxisText x={c.axisX} y={y} $bold={b}>{t}</AxisText>
        </g>
      ))}
      {c.tags.map(([t, y, x, w2, gold], k) => {
        const col = gold ? "#111" : k === 1 ? "#d8a53b" : "#a022a8";
        const fill = gold ? "#fcc40c" : k === 1 ? "#eef2f8" : "#dde6f6";
        return (
          <g key={t}>
            <rect x={x + .5} y={y - 6.500} width={w2} height="13" fill={fill} stroke="#a9bac8" />
            <TagText x={x + 2} y={y} fill={col}>{t}</TagText>
          </g>
        );
      })}
      {c.dates.map(([t, x, b]) => <DateText key={t} x={x + .5} y={417} $bold={b}>{t}</DateText>)}
    </svg>
  );
};

const ChartFrame = ({ c, i }) => (
  <ChartWindow $w={c.width} $ml={c.ml}>
    <TitleBar $lead={c.lead}>
      <Logo w={15} h={18} />
      <Caret />
      <Sym $w={c.symW}>{c.sym}</Sym>
      <InfoBox>i</InfoBox>
      <Quote $up={c.up}>{c.quote}</Quote>
      <Clock>{c.clock}</Clock>
      <Name>{c.name}</Name>
      <BlueControls $left={c.ctlLeft}><KeyboardKey /><WinMarks c="#fff" /></BlueControls>
    </TitleBar>
    <ControlBar $lead={c.ctl.lead}>
      <Select>{c.span}<SelectArrow /></Select>
      <Select $ml={c.ctl.g1}>Journalier<SelectArrow /></Select>
      <IndicatorBtn $ml={c.ctl.g2}><IndicatorIcon /><SmallCaret /></IndicatorBtn>
      <SideTab $mr={c.ctl.tab}><SideArrows /></SideTab>
    </ControlBar>
    <Surface $ml={c.surfL - c.left} $mr={c.left + c.width - c.surfR}><ChartPlot c={c} i={i} /></Surface>
    <BottomTools>
      <BottomCell><Share /></BottomCell>
      <BottomCell>{i === 1 ? <ChainCandle /> : <Chain />}</BottomCell>
      <BottomCell><Note /></BottomCell>
      <BottomCell><Ladder /></BottomCell>
      <ScrollBar $w={c.bars}><ScrollEnd $left /><ScrollEnd /></ScrollBar>
      <BottomCell><WrenchChart /></BottomCell>
      <BottomCell><Magnifier kind="fit" /></BottomCell>
      <BottomCell><Magnifier kind="minus" /></BottomCell>
      <BottomCell><Magnifier kind="plus" /></BottomCell>
    </BottomTools>
  </ChartWindow>
);

const code = [
  [["a=Period", "t"]],
  [["inner = ", "t"], ["2", "n"], ["*", "t"], ["weightedaverage", "f"], ["[ round", "k"], ["( a/", "t"], ["2", "n"], [" ) ", "t"], ["]", "k"], ["(close)", "k"], ["-", "t"], ["weightedaverage", "f"], ["[", "k"], ["a", "t"], ["]", "k"], ["(close)", "k"]],
  [["MMHULL=", "t"], ["weightedaverage", "f"], ["[ round", "k"], ["( ", "t"], ["sqrt", "k"], ["(a) ) ", "t"], ["]", "k"], ["( inner )", "t"]],
  [],
  [["//inner = 2*weightedaverage[ round( a/2 ) ](close)-weightedaverage[a](close)", "c"]],
  [["//MMHULL= (weightedaverage[ round( sqrt(a) ) ](2*weightedaverage[ round( a/2 ) ](close)-weightedaverage[a](close)))", "c"]],
  [],
  [["return", "k"], [" MMHULL", "t"]],
  [],
];

const tree = [
  { t: "Prix", d: 0, short: true },
  { t: "HULL (15)", d: 0, sel: true },
  { t: "Moyenne mobile (Hull 15)", d: 0 },
  { t: "Ordres exécutés récents", d: 0 },
  { t: "Prix Divergence RSI", d: 0, exp: true },
  { t: "Prix Divergence RSI", d: 1, short: true },
  { t: "Prix Divergence RSI2", d: 1 },
  { t: "Volume par niveaux de prix (25 1)", d: 0 },
];

const edSeq = [["cut"], ["copy"], ["paste"], 0, ["undo"], ["redo"], 0, ["find"], ["comment"], 0, ["less"], ["more"], 0, ["bulb"], ["fx"], ["help"], ["print"]];

export default function App() {
  return (
    <Page>
      <Global />
      <TopBand>
        <MainBar>
          <MenuRow>
            <Logo w={15} h={19} />
            <MenuItem $gap={6}>Fichier</MenuItem>
            <MenuItem $gap={10}>Affichage</MenuItem>
            <MenuItem $gap={9}>Trading</MenuItem>
            <MenuItem $gap={7}>Objets</MenuItem>
            <MenuItem $gap={9}>Options</MenuItem>
            <MenuItem $gap={9}>Aide</MenuItem>
            <Instrument>00 EURO WEEKLY</Instrument>
            <PremiumBadge><i>ProRealTime</i> Premium</PremiumBadge>
            <WindowControls $ml="6px" $pad={1}><PinMarks c="#8a9ba3" /></WindowControls>
          </MenuRow>
          <ToolRow>
            {toolOrder.map((k, i) => <ToolCell key={k} $on={i === 0}><Svg w={k === "zig" || k === "fan" ? 24 : 22} h={22}>{tools[k]}</Svg></ToolCell>)}
            <PushGroup>
              <PushButton $w={55}>Push+<Logo w={13} h={16} /></PushButton>
              <PushButton $alt $w={67}>DealThru<Thrust /></PushButton>
            </PushGroup>
          </ToolRow>
        </MainBar>
        <ListPanel>
          <ListHead>
            <Logo w={15} h={18} />
            <ListTitle>Listes</ListTitle>
            <ListSelect>00 RECO<SmallArrow /></ListSelect>
            <IconSlot $w={16} $ml={2}><Wrench /></IconSlot>
            <IconSlot $w={14} $ml={109}>{Tiny.arrowD}</IconSlot>
            <IconSlot $w={14} $ml={5}>{Tiny.arrowU}</IconSlot>
            <IconSlot $w={18} $ml={9}><Chain w={16} h={18} /></IconSlot>
            <IconSlot $w={20} $ml={4}>{Tiny.printer}</IconSlot>
            <IconSlot $w={16} $ml={3}><Note /></IconSlot>
            <WindowControls><WinMarks c="#8a9ba3" /></WindowControls>
          </ListHead>
          <TableHead>
            <HeadIcon><Wrench s={13} c="#e8eef3" fill="#e8eef3" /></HeadIcon>
            <HeadCell $pad={16}>Nom</HeadCell>
            <HeadCell $pad={12}><SortArrow>⇧</SortArrow>Dernier</HeadCell>
            <HeadCell>%Var</HeadCell>
          </TableHead>
          <TableRow>
            <RowCells>
              <RowCell>Spotify Tech SA (All Sessions)</RowCell>
              <RowCell $right>180,00(c)</RowCell>
              <RowCell $right>+1,24%</RowCell>
            </RowCells>
            <Stepper />
          </TableRow>
        </ListPanel>
      </TopBand>
      <ChartBand>
        {charts.map((c, i) => <ChartFrame key={i} c={c} i={i} />)}
      </ChartBand>
      <BuilderBand>
        <BuilderTitle>
          <Logo w={15} h={19} />
          <BuilderLabel>ProBuilder - Création d'indicateur -</BuilderLabel>
          <NameInput>HULL</NameInput>
          <IconSlot $w={20} $ml={4}>{Tiny.docHelp}</IconSlot>
          <WindowControls><WinMarks c="#8a9ba3" /></WindowControls>
        </BuilderTitle>
        <TabPanel>
          <VarRow>
            <WrenchBtn><Wrench s={13} /></WrenchBtn>
            <VarLabel>Variables</VarLabel>
            <VarCode>period<em>[</em><b>30</b><em>]</em></VarCode>
          </VarRow>
          <EditorBox>
            <EditorTools>
              {edSeq.map((e, i) => e === 0
                ? <EdSep key={i} />
                : <EdCell key={i}><Svg w={22} h={22}>{edIcons[e[0]]}</Svg></EdCell>)}
            </EditorTools>
            <CodeWrap>
              <Gutter>{code.map((_, i) => <GutterNum key={i}>{i + 1}</GutterNum>)}</Gutter>
              <CodeCol>
                {code.map((toks, i) => (
                  <CodeLine key={i} $hl={i === 8}>
                    {toks.map((tk, j) => <Tok key={j} $t={tk[1]}>{tk[0]}</Tok>)}
                  </CodeLine>
                ))}
              </CodeCol>
            </CodeWrap>
          </EditorBox>
        </TabPanel>
        <Dialog>
          <DialogTitle>
            <Logo w={15} h={17} />
            <BuilderLabel>Propriétés - Prix</BuilderLabel>
            <WindowControls $pad={4}><Svg w={12} h={12} vb="0 0 12 12"><path d="M1 1l10 10m0-10L1 11" stroke="#8a9ba3" strokeWidth="1.800" /></Svg></WindowControls>
          </DialogTitle>
          <DialogBody>
            <LeftPane>
              <ActionRow>
                <Action $w={92}><ActionIcon><DocPlus /></ActionIcon><ActionLabel>Ajouter indicateur</ActionLabel></Action>
                <ActionSep />
                <Action $w={109}><ActionIcon><DocPlus wave /></ActionIcon><ActionLabel>Ajouter remplissage</ActionLabel></Action>
                <ActionSep />
                <Action $w={61}><ActionIcon><Duplicate /></ActionIcon><ActionLabel>Dupliquer</ActionLabel></Action>
                <ActionSep />
                <Action $w={67}><ActionIcon><Trash /></ActionIcon><ActionLabel>Supprimer</ActionLabel></Action>
              </ActionRow>
              <TreeBox>
                {tree.map((n, i) => (
                  <TreeRow key={i} $depth={n.d} $short={n.short}>
                    {n.exp && <Expander />}
                    <TreeLabel $sel={n.sel}>{n.t}</TreeLabel>
                  </TreeRow>
                ))}
              </TreeBox>
            </LeftPane>
            <RightPane>
              <SectionTitle>Propriétés</SectionTitle>
              <BubbleSlot>{Tiny.bubble}</BubbleSlot>
              <PeriodRow><PeriodLabel>period</PeriodLabel><NumInput>15<SpinBtn /></NumInput></PeriodRow>
              <ModifyBtn>Modifier</ModifyBtn>
              <SectionTitle $mt={8}>Couleur</SectionTitle>
              <ColorRow>
                <Swatch /><ColorLabel $w={35}>Hausse</ColorLabel><Dash /><LinkBox><Chain w={14} h={19} /></LinkBox><Dash /><Swatch /><ColorLabel $w={35}>Baisse</ColorLabel>
              </ColorRow>
              <SectionTitle $mt={8}>Epaisseur</SectionTitle>
              <SelectWrap $lead={60}><Select $w={77} $h={18}><LineSample /><SelectArrow /></Select></SelectWrap>
              <SectionTitle $mt={8}>Style</SectionTitle>
              <SelectWrap $lead={56}><Select $w={85} $h={18}>{Tiny.styleSample}<LineSample /><SelectArrow /></Select></SelectWrap>
            </RightPane>
          </DialogBody>
        </Dialog>
      </BuilderBand>
      <Taskbar>
        <StartBtn>{Tiny.win}</StartBtn>
        <SearchBox>{Tiny.ring}<SearchText>Taper ici pour rechercher</SearchText><IconSlot $w={12} $ml={0}>{Tiny.mic}</IconSlot><IconSlot $w={10} /></SearchBox>
        <TaskIcon>{Tiny.view}</TaskIcon>
        <TaskIcon>{Tiny.edge}</TaskIcon>
        <TaskIcon>{Tiny.folder}</TaskIcon>
        <TaskIcon>{Tiny.store}</TaskIcon>
        <TaskIcon $run>{Tiny.chrome}</TaskIcon>
        <TaskIcon>{Tiny.mail}</TaskIcon>
        <TaskIcon>{Tiny.calc}</TaskIcon>
        <TaskIcon $run $active><Logo w={15} h={18} /></TaskIcon>
        <TaskIcon $run>{Tiny.ppt}</TaskIcon>
        <TrayWrap>
          <TrayIcon>{Tiny.person}</TrayIcon>
          <TrayIcon $w={10} />
          <TrayIcon>{Tiny.chev}</TrayIcon>
          <TrayIcon>{Tiny.net}</TrayIcon>
          <TrayIcon>{Tiny.cloud}</TrayIcon>
          <TrayIcon>{Tiny.vol}</TrayIcon>
          <TrayIcon $w={30}>FRA</TrayIcon>
          <ClockBox>12:27<br />26/09/2018</ClockBox>
          <TrayIcon $w={45}>{Tiny.notif}</TrayIcon>
        </TrayWrap>
      </Taskbar>
    </Page>
  );
}
